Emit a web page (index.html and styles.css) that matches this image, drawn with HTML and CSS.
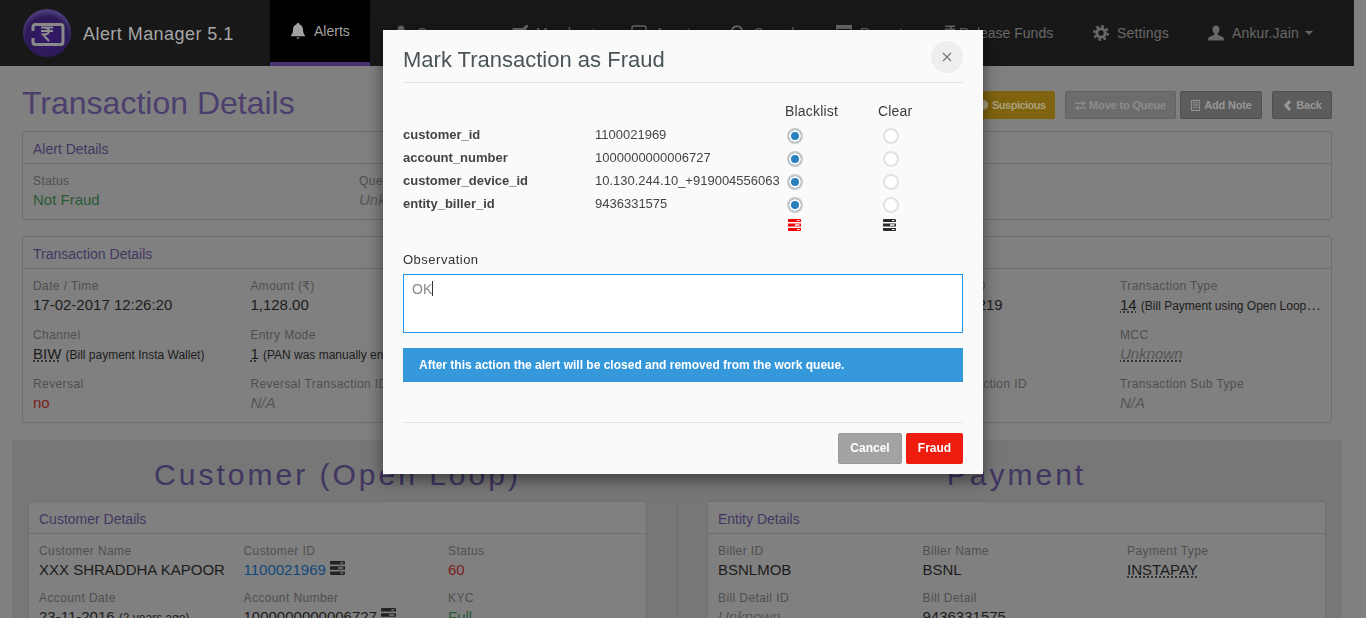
FILE: index.html
```html
<!DOCTYPE html>
<html lang="en">

<head>
    <meta charset="UTF-8">
    <meta name="viewport" content="width=device-width, initial-scale=1.0">
    <title>Alert Manager 5.1</title>
    <link rel="stylesheet" href="styles.css">
</head>

<body>
    <svg class="icon-defs" aria-hidden="true">
        <symbol id="i-bell" viewBox="0 0 16 16"><path d="M8 0c.8 0 1.3.6 1.3 1.2C11.7 1.9 13 4 13 6.6c0 3.2 1 4.8 2 5.8v.8H1v-.8c1-1 2-2.6 2-5.8C3 4 4.300 1.900 6.700 1.200 6.700.6 7.200 0 8 0z"/><path d="M6.500 14.400h3a1.500 1.300 0 0 1-3 0z"/></symbol>
        <symbol id="i-user" viewBox="0 0 16 16"><path d="M8 .5c2.100 0 3.500 1.700 3.500 3.900 0 1.700-.8 3.200-1.900 4v1.300l4.600 2c1.100.5 1.600 1 1.600 2.100v1.700H.2v-1.700c0-1.100.5-1.600 1.600-2.100l4.600-2V8.400c-1.100-.8-1.900-2.300-1.900-4C4.500 2.200 5.900.5 8 .5z"/></symbol>
        <symbol id="i-gear" viewBox="0 0 16 16"><circle cx="8" cy="8" r="4.200" fill="none" stroke="currentColor" stroke-width="3"/><circle cx="8" cy="8" r="6.800" fill="none" stroke="currentColor" stroke-width="2.400" stroke-dasharray="2.700 2.640"/></symbol>
        <symbol id="i-cart" viewBox="0 0 16 16"><path d="M16 0v1.500L11 9H3L0 3h10.500L14 0z"/><circle cx="4" cy="13" r="1.800"/><circle cx="10" cy="13" r="1.800"/></symbol>
        <symbol id="i-box" viewBox="0 0 16 16"><rect x="1" y="1" width="14" height="14" rx="2" fill="none" stroke="currentColor" stroke-width="1.500"/></symbol>
        <symbol id="i-search" viewBox="0 0 16 16"><circle cx="7" cy="6.500" r="5.300" fill="none" stroke="currentColor" stroke-width="2"/><path d="M10.500 10.500l4.500 4.500" stroke="currentColor" stroke-width="2.500"/></symbol>
        <symbol id="i-report" viewBox="0 0 16 16"><path fill-rule="evenodd" d="M0 0h16v16H0zM1.500 4v10.500h13V4zM3 6h10v1.200H3zM3 9h10v1.200H3zM3 12h7v1.200H3z"/></symbol>
        <symbol id="i-rupee" viewBox="0 0 10 16"><path d="M0 .5h10v1.600H6.600c.5.5.8 1 1 1.500H10v1.600H7.700C7.300 7.200 5.800 8.400 4 8.600L9 15.500H6.800L1.500 8.200V7h2c1 0 1.900-.5 2.300-1.800H0V3.600h5.800C5.400 2.700 4.500 2.100 3.500 2.100H0z"/></symbol>
        <symbol id="i-tasks" viewBox="0 0 13 12"><path fill-rule="evenodd" d="M1 0h11a1 1 0 0 1 1 1v2H0V1a1 1 0 0 1 1-1zM9 1v1h2.500V1zM0 4.400h13v3.200H0zM7 5.300v1.400h4.500V5.300zM0 9h13v2a1 1 0 0 1-1 1H1a1 1 0 0 1-1-1zM9 10v1h2.500v-1z"/></symbol>
        <symbol id="i-swap" viewBox="0 0 12 12"><path d="M0 2.800h8V.5L12 3.500 8 6.500V4.300H0zM12 7.800H4V5.500L0 8.500l4 3V9.300h8z"/></symbol>
        <symbol id="i-note" viewBox="0 0 12 12"><path fill-rule="evenodd" d="M1 0h10v12H1zM2 1v10h8V1zM3 2.500h6v1H3zM3 5h6v1H3zM3 7.500h6v1H3z"/></symbol>
        <symbol id="i-back" viewBox="0 0 10 12"><path d="M6.500 0L9 2.500 5.500 6 9 9.500 6.500 12 1 6z"/></symbol>
    </svg>

    <header class="topbar">
        <div class="brand">
            <svg class="brand-logo" viewBox="0 0 48 48">
                <defs>
                    <radialGradient id="logo-fill" cx="50%" cy="60%" r="55%">
                        <stop offset="0" stop-color="#34196a"/>
                        <stop offset="0.8" stop-color="#2d1a58"/>
                        <stop offset="1" stop-color="#4a3a78"/>
                    </radialGradient>
                </defs>
                <circle cx="24" cy="24" r="24" fill="url(#logo-fill)"/>
                <path d="M10 22v-4a2.500 2.500 0 0 1 2.500-2.500h25a2.500 2.500 0 0 1 2.500 2.500v15a2.500 2.500 0 0 1-2.500 2.500h-25a2.500 2.500 0 0 1-2.500-2.500v-4" fill="none" stroke="#8a8a8a" stroke-width="3"/>
                <path d="M18 18.500h12M18 22h12M20 18.500c5 0 6 1.500 6 3.500s-2 3.500-6 3.500l6 6.500" fill="none" stroke="#8f8f8f" stroke-width="2"/>
            </svg>
            <span class="brand-name">Alert Manager 5.1</span>
        </div>
        <nav class="nav">
            <a class="nav-item nav-alerts is-active"><svg class="nav-icon"><use href="#i-bell"/></svg>Alerts</a>
            <a class="nav-item nav-cases"><svg class="nav-icon"><use href="#i-user"/></svg>Cases</a>
            <a class="nav-item nav-merchants"><svg class="nav-icon"><use href="#i-cart"/></svg>Merchants</a>
            <a class="nav-item nav-assets"><svg class="nav-icon"><use href="#i-box"/></svg>Assets</a>
            <a class="nav-item nav-search"><svg class="nav-icon"><use href="#i-search"/></svg>Search</a>
            <a class="nav-item nav-reports"><svg class="nav-icon"><use href="#i-report"/></svg>Reports</a>
            <a class="nav-item nav-funds"><svg class="nav-icon nav-icon-thin"><use href="#i-rupee"/></svg>Release Funds</a>
            <a class="nav-item nav-settings"><svg class="nav-icon"><use href="#i-gear"/></svg>Settings</a>
            <a class="nav-item"><svg class="nav-icon"><use href="#i-user"/></svg>Ankur.Jain<span class="caret"></span></a>
        </nav>
    </header>

    <main class="page">
        <div class="title-row">
            <h1 class="page-title">Transaction Details</h1>
            <div class="actions">
                <button class="btn btn-yellow"><span class="btn-dot"></span>Suspicious</button>
                <button class="btn btn-light"><svg class="btn-icon"><use href="#i-swap"/></svg>Move to Queue</button>
                <button class="btn btn-dark btn-note"><svg class="btn-icon"><use href="#i-note"/></svg>Add Note</button>
                <button class="btn btn-dark btn-back"><svg class="btn-icon"><use href="#i-back"/></svg>Back</button>
            </div>
        </div>

        <section class="panel">
            <h2 class="panel-head">Alert Details</h2>
            <div class="panel-body cols-alert">
                <div class="field"><div class="label">Status</div><div class="value green">Not Fraud</div></div>
                <div class="field"><div class="label">Queue</div><div class="value muted">Unknown</div></div>
            </div>
        </section>

        <section class="panel panel-gap">
            <h2 class="panel-head">Transaction Details</h2>
            <div class="panel-body cols-six">
                <div class="field"><div class="label">Date / Time</div><div class="value">17-02-2017 12:26:20</div></div>
                <div class="field"><div class="label">Amount (₹)</div><div class="value">1,128.00</div></div>
                <div class="field"></div>
                <div class="field"></div>
                <div class="field"><div class="label">Transaction ID</div><div class="value">703412261219</div></div>
                <div class="field field-last"><div class="label">Transaction Type</div><div class="value"><abbr>14</abbr> <small>(Bill Payment using Open Loop Wallet)</small></div></div>

                <div class="field"><div class="label">Channel</div><div class="value"><abbr>BIW</abbr> <small>(Bill payment Insta Wallet)</small></div></div>
                <div class="field"><div class="label">Entry Mode</div><div class="value"><abbr>1</abbr> <small>(PAN was manually entered)</small></div></div>
                <div class="field"></div>
                <div class="field"></div>
                <div class="field"></div>
                <div class="field field-last"><div class="label">MCC</div><div class="value muted"><abbr>Unknown</abbr></div></div>

                <div class="field row-end"><div class="label">Reversal</div><div class="value red">no</div></div>
                <div class="field row-end"><div class="label">Reversal Transaction ID</div><div class="value muted">N/A</div></div>
                <div class="field row-end"></div>
                <div class="field row-end"></div>
                <div class="field row-end"><div class="label">Linked Transaction ID</div></div>
                <div class="field field-last row-end"><div class="label">Transaction Sub Type</div><div class="value muted">N/A</div></div>
            </div>
        </section>

        <div class="split">
            <div class="split-col">
                <h2 class="split-title">Customer (Open Loop)</h2>
                <section class="panel">
                    <h2 class="panel-head">Customer Details</h2>
                    <div class="panel-body cols-three">
                        <div class="field"><div class="label">Customer Name</div><div class="value">XXX SHRADDHA KAPOOR</div></div>
                        <div class="field"><div class="label">Customer ID</div><div class="value"><span class="link">1100021969</span> <svg class="tasks tasks-lg"><use href="#i-tasks"/></svg></div></div>
                        <div class="field"><div class="label">Status</div><div class="value red">60</div></div>
                        <div class="field"><div class="label">Account Date</div><div class="value">23-11-2016 <small>(2 years ago)</small></div></div>
                        <div class="field"><div class="label">Account Number</div><div class="value">1000000000006727 <svg class="tasks tasks-lg"><use href="#i-tasks"/></svg></div></div>
                        <div class="field"><div class="label">KYC</div><div class="value green">Full</div></div>
                    </div>
                </section>
            </div>
            <div class="split-line"></div>
            <div class="split-col">
                <h2 class="split-title">Payment</h2>
                <section class="panel">
                    <h2 class="panel-head">Entity Details</h2>
                    <div class="panel-body cols-three">
                        <div class="field"><div class="label">Biller ID</div><div class="value">BSNLMOB</div></div>
                        <div class="field"><div class="label">Biller Name</div><div class="value">BSNL</div></div>
                        <div class="field"><div class="label">Payment Type</div><div class="value"><abbr>INSTAPAY</abbr></div></div>
                        <div class="field"><div class="label">Bill Detail ID</div><div class="value muted">Unknown</div></div>
                        <div class="field"><div class="label">Bill Detail</div><div class="value">9436331575</div></div>
                    </div>
                </section>
            </div>
        </div>
    </main>

    <div class="modal">
        <div class="modal-head">
            <h3 class="modal-title">Mark Transaction as Fraud</h3>
            <span class="modal-close">
                <svg width="10" height="10" viewBox="0 0 10 10"><path d="M1 1l8 8M9 1l-8 8" stroke="#777" stroke-width="1.300"/></svg>
            </span>
        </div>

        <div class="fraud-grid">
            <div></div><div></div><div class="col-head">Blacklist</div><div class="col-head">Clear</div>

            <div class="key">customer_id</div><div class="val">1100021969</div>
            <div class="cell-black"><span class="radio is-on"></span></div><div class="cell-clear"><span class="radio"></span></div>

            <div class="key">account_number</div><div class="val">1000000000006727</div>
            <div class="cell-black"><span class="radio is-on"></span></div><div class="cell-clear"><span class="radio"></span></div>

            <div class="key">customer_device_id</div><div class="val">10.130.244.10_+919004556063</div>
            <div class="cell-black"><span class="radio is-on"></span></div><div class="cell-clear"><span class="radio"></span></div>

            <div class="key">entity_biller_id</div><div class="val">9436331575</div>
            <div class="cell-black"><span class="radio is-on"></span></div><div class="cell-clear"><span class="radio"></span></div>

            <div></div><div></div>
            <div class="cell-black cell-icon"><svg class="tasks tasks-red"><use href="#i-tasks"/></svg></div>
            <div class="cell-clear cell-icon"><svg class="tasks tasks-black"><use href="#i-tasks"/></svg></div>
        </div>

        <div class="obs-label">Observation</div>
        <div class="obs-box">OK<span class="text-caret"></span></div>
        <div class="info-bar">After this action the alert will be closed and removed from the work queue.</div>

        <div class="modal-foot">
            <button class="foot-btn foot-cancel">Cancel</button>
            <button class="foot-btn foot-fraud">Fraud</button>
        </div>
    </div>
</body>

</html>
```

FILE: styles.css
```css
* {
    box-sizing: border-box;
}

html,
body {
    margin: 0;
    height: 618px;
    overflow: hidden;
}

body {
    font-family: 'Liberation Sans', 'DejaVu Sans', sans-serif;
    background-color: #808080;
    color: #1c1c1c;
}

.icon-defs {
    display: none;
}

/* top bar */
.topbar {
    display: flex;
    width: 1354px;
    height: 66px;
    background-color: #181818;
}

.brand {
    display: flex;
    align-items: center;
    gap: 12px;
    width: 270px;
    padding-left: 23px;
}

.brand-logo {
    width: 48px;
    height: 48px;
}

.brand-name {
    margin-top: 2px;
    font-size: 18px;
    letter-spacing: 0.45px;
    color: #a6a6a6;
}

.nav {
    display: flex;
}

.nav-item {
    display: flex;
    align-items: center;
    gap: 8px;
    height: 66px;
    padding: 0 0 0 23px;
    font-size: 14px;
    letter-spacing: 0.15px;
    color: #686868;
    white-space: nowrap;
}

.nav-alerts {
    width: 100px;
    padding-left: 20px;
    letter-spacing: 0;
    color: #a2a2a2;
}

.nav-item.is-active {
    background-color: #000;
    border-bottom: 4px solid #47336f;
}

.nav-cases,
.nav-merchants {
    width: 119px;
}

.nav-assets {
    width: 99px;
}

.nav-search {
    width: 106px;
}

.nav-reports {
    width: 109px;
}

.nav-funds {
    width: 148px;
    letter-spacing: 0;
}

.nav-settings {
    width: 115px;
}

.nav-icon {
    width: 16px;
    height: 16px;
    fill: currentColor;
    flex: none;
}

.nav-icon-thin {
    width: 10px;
    margin-right: -4px;
}

.caret {
    width: 0;
    height: 0;
    margin-left: -2px;
    border-left: 4px solid transparent;
    border-right: 4px solid transparent;
    border-top: 4px solid #686868;
}

/* page under the dialog */
.page {
    width: 1354px;
    padding: 0 22px;
}

.title-row {
    display: flex;
    justify-content: space-between;
    height: 65px;
}

.page-title {
    margin: 18px 0 0;
    font-size: 32px;
    font-weight: normal;
    line-height: 38px;
    color: #4c3f6e;
}

.actions {
    display: flex;
    gap: 10px;
    margin-top: 25px;
}

.btn {
    display: flex;
    align-items: center;
    justify-content: center;
    gap: 3px;
    height: 28px;
    padding: 0;
    border: 1px solid #555;
    border-radius: 2px;
    font-family: inherit;
    font-size: 11px;
    font-weight: bold;
    letter-spacing: -0.15px;
}

.btn-icon {
    width: 11px;
    height: 11px;
    fill: currentColor;
}

.btn-dot {
    width: 10px;
    height: 10px;
    margin-right: 1px;
    border-radius: 50%;
    background-color: #a9a07d;
}

.btn-yellow {
    width: 90px;
    padding-left: 12px;
    justify-content: flex-start;
    background-color: #80630f;
    border-color: #80630f;
    letter-spacing: -0.5px;
    color: #a9a07d;
}

.btn-light {
    width: 111px;
    background-color: #6c6c6c;
    border-color: #626262;
    color: #8c8c8c;
}

.btn-dark {
    background-color: #5c5c5c;
    border-color: #505050;
    color: #979797;
}

.btn-note {
    width: 82px;
    margin-left: -6px;
}

.btn-back {
    width: 60px;
}

.panel {
    background-color: #808080;
    border: 1px solid #6e6e6e;
    border-radius: 3px;
}

.panel-gap {
    margin-top: 16px;
}

.panel-head {
    height: 32px;
    margin: 0;
    padding: 0 10px;
    border-bottom: 1px solid #6e6e6e;
    font-size: 14px;
    font-weight: normal;
    line-height: 34px;
    color: #433762;
}

.panel-body {
    display: grid;
    padding: 8px 0 0 10px;
}

.cols-alert {
    grid-template-columns: repeat(4, 326px);
}

.cols-six {
    grid-template-columns: repeat(6, 217.4px);
}

.cols-three {
    grid-template-columns: repeat(3, 204.5px);
}

.field {
    min-width: 0;
    margin-bottom: 8px;
    padding-right: 8px;
}

.cols-six .field {
    margin-bottom: 10px;
}

.cols-six .row-end {
    margin-bottom: 8px;
}

.cols-six .field-last {
    padding-right: 14px;
}

.label {
    height: 18px;
    font-size: 12px;
    letter-spacing: 0.4px;
    line-height: 18px;
    color: #4f4f4f;
}

.value {
    height: 21px;
    overflow: hidden;
    font-size: 15px;
    line-height: 20px;
    white-space: nowrap;
    text-overflow: ellipsis;
}

.value small {
    font-size: 12px;
}

.value abbr {
    text-decoration: underline dotted #1c1c1c;
    text-underline-offset: 2px;
}

.green {
    color: #2a5a38;
}

.red {
    color: #7a2020;
}

.muted {
    font-style: italic;
    color: #555;
}

.link {
    color: #10497c;
}

.tasks {
    width: 13px;
    height: 12px;
    fill: #222;
}

.tasks-lg {
    width: 15px;
    height: 14px;
    vertical-align: 0;
}

.split {
    display: grid;
    grid-template-columns: minmax(0, 1fr) 1px minmax(0, 1fr);
    column-gap: 29.5px;
    margin: 17px -10px 0;
    padding: 16px 16px 20px;
    background-color: #777;
}

.split-title {
    margin: 0 0 7px;
    font-size: 30px;
    font-weight: normal;
    letter-spacing: 3px;
    line-height: 38px;
    text-align: center;
    color: #413562;
}

.split-line {
    margin-top: 45px;
    background-color: #6c6c6c;
}

/* dialog */
.modal {
    position: fixed;
    top: 30px;
    left: 383px;
    width: 600px;
    height: 444px;
    padding: 0 20px;
    background-color: #fafafa;
    box-shadow: 0 5px 15px rgba(0, 0, 0, 0.5);
}

.modal-head {
    display: flex;
    justify-content: space-between;
    align-items: center;
    height: 53px;
    border-bottom: 1px solid #e3e3e3;
}

.modal-title {
    margin: 8px 0 0;
    font-size: 22px;
    font-weight: normal;
    color: #4a5459;
}

.modal-close {
    display: flex;
    align-items: center;
    justify-content: center;
    width: 32px;
    height: 32px;
    margin-top: 1px;
    border-radius: 50%;
    background-color: #efeeee;
}

.fraud-grid {
    display: grid;
    grid-template-columns: 192px 189px 94px 1fr;
    grid-auto-rows: 23px;
    align-items: center;
    margin-top: 17px;
    font-size: 13px;
    color: #444;
}

.col-head {
    padding: 0 0 2px 1px;
    font-size: 14px;
    letter-spacing: 0.2px;
    color: #3c3c3c;
}

.col-head + .col-head {
    padding-left: 0;
}

.key {
    font-weight: bold;
    color: #444;
}

.val {
    white-space: nowrap;
}

.cell-black {
    display: flex;
    padding: 2px 0 0 3px;
}

.cell-clear {
    display: flex;
    padding: 2px 0 0 5px;
}

.cell-black.cell-icon {
    align-self: start;
    padding: 4px 0 0 4px;
}

.cell-clear.cell-icon {
    align-self: start;
    padding: 4px 0 0 5px;
}

.radio {
    display: block;
    width: 16px;
    height: 16px;
    border: 2px solid #e2e2e2;
    border-radius: 50%;
    background-color: #fff;
}

.radio.is-on {
    border-color: #c8c8c8;
    background-color: #2980bd;
    box-shadow: inset 0 0 0 2px #fff;
}

.tasks-red {
    fill: #f80000;
}

.tasks-black {
    fill: #2b2b2b;
}

.obs-label {
    margin-top: 12px;
    font-size: 13px;
    letter-spacing: 0.5px;
    line-height: 20px;
    color: #333;
}

.obs-box {
    height: 59px;
    margin-top: 4px;
    padding: 4px 8px;
    background-color: #fff;
    border: 1px solid #2196f3;
    font-size: 14px;
    line-height: 20px;
    color: #888;
}

.text-caret {
    display: inline-block;
    width: 1px;
    height: 15px;
    vertical-align: -2px;
    background-color: #333;
}

.info-bar {
    height: 34px;
    margin-top: 15px;
    padding-left: 16px;
    background-color: #3498db;
    font-size: 12px;
    font-weight: bold;
    line-height: 35px;
    color: #fff;
}

.modal-foot {
    display: flex;
    justify-content: flex-end;
    gap: 4px;
    margin-top: 40px;
    padding-top: 10px;
    border-top: 1px solid #e3e3e3;
}

.foot-btn {
    height: 31px;
    padding: 0 0 2px;
    border: 1px solid transparent;
    border-radius: 2px;
    font-family: inherit;
    font-size: 12px;
    font-weight: bold;
    color: #fff;
}

.foot-cancel {
    width: 64px;
    background-color: #a3a3a5;
    border-color: #999;
}

.foot-fraud {
    width: 57px;
    background-color: #ee1c0e;
}
```
